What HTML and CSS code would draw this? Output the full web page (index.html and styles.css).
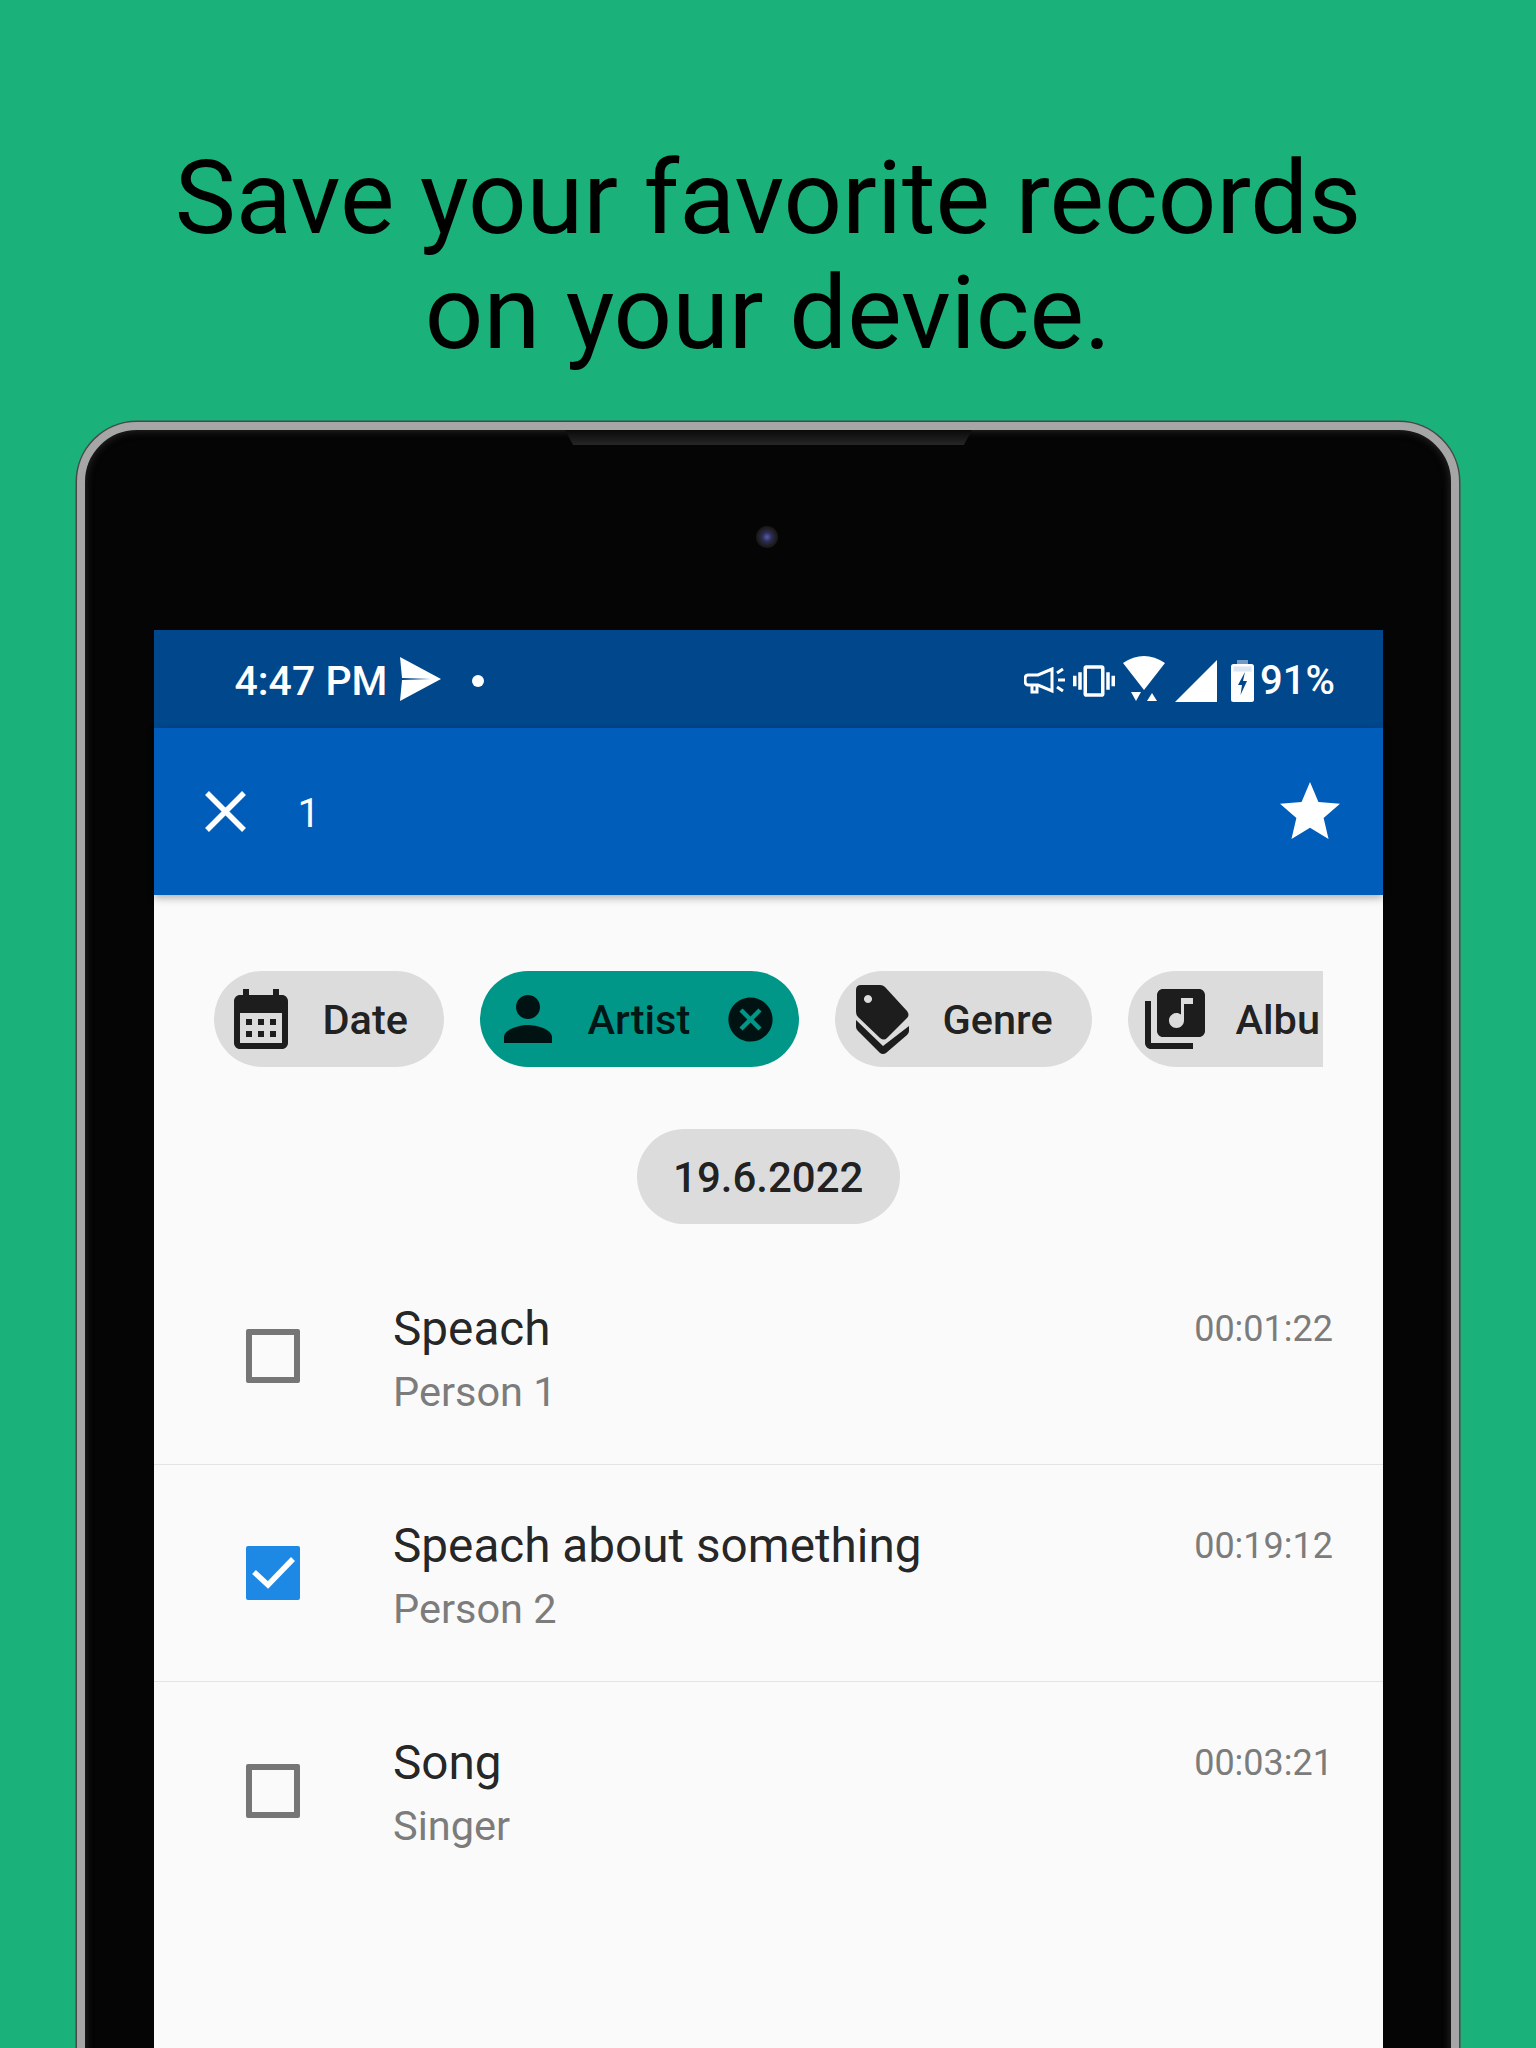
FILE: index.html

```html
<!DOCTYPE html>
<html lang="en">
<head>
  <meta charset="UTF-8" />
  <title>Save your favorite records</title>
  <link rel="stylesheet" href="styles.css">
</head>
<body>
  <div class="page">
    <h1 class="headline">Save your favorite records<br>on your device.</h1>

    <div class="device">
      <div class="notch"></div>
      <div class="camera"></div>

      <div class="screen">
        <div class="status-bar">
          <span class="clock">4:47 PM</span>
          <svg class="ic-send" viewBox="0 0 42 44"><path d="M1 0L42 22L1 44L3 23L32 22L3 21z" fill="#fff"/></svg>
          <span class="dot"></span>
          <span class="spacer"></span>
          <svg class="ic-mega" viewBox="0 0 42 28" fill="none" stroke="#fff" stroke-width="3">
            <path d="M4 8H14L28 2V24L14 18H4Q1 18 1 13Q1 8 4 8z"/>
            <path d="M8 18V25H13V19"/>
            <path d="M33 6L39 2M34 13H41M33 20L39 24"/>
          </svg>
          <svg class="ic-vib" viewBox="0 0 24 24"><path fill="#fff" d="M0 15h2V9H0v6zm3 2h2V7H3v10zm19-8v6h2V9h-2zm-3 8h2V7h-2v10zM16.5 3h-9C6.67 3 6 3.67 6 4.5v15c0 .83.67 1.5 1.5 1.5h9c.83 0 1.5-.67 1.5-1.5v-15c0-.83-.67-1.5-1.5-1.5zM16 19H8V5h8v14z"/></svg>
          <svg class="ic-wifi" viewBox="0 0 42 46"><path fill="#fff" d="M0 7Q21 -7 42 7L21 34zM8 36H18L13 45zM24 45H34L29 37z"/></svg>
          <svg class="ic-signal" viewBox="0 0 42 42"><path fill="#fff" d="M0 42L42 0V42z"/></svg>
          <svg class="ic-batt" viewBox="0 0 23 42">
            <rect x="6" y="0" width="11" height="5" fill="#fff" opacity=".45"/>
            <rect x="0" y="4" width="23" height="38" rx="2.5" fill="#fff"/>
            <rect x="2.5" y="6.5" width="18" height="5" fill="#dbe6f3"/>
            <path fill="#01478c" d="M14 12L7 25H11L9.5 35L16 21H12z"/>
          </svg>
          <span class="battery-text">91%</span>
        </div>

        <div class="app-bar">
          <svg class="ic-close" viewBox="0 0 41 41"><path d="M2 2L39 39M39 2L2 39" stroke="#fff" stroke-width="5.5" fill="none"/></svg>
          <span class="count">1</span>
          <span class="spacer"></span>
          <svg class="ic-star" viewBox="0 0 24 24"><path fill="#fff" d="M12 17.27L18.18 21l-1.64-7.03L22 9.24l-7.19-.61L12 2 9.19 8.63 2 9.24l5.46 4.73L5.82 21z"/></svg>
        </div>

        <div class="content">
          <div class="chips">
            <div class="chip chip-date">
              <svg class="chip-icon" viewBox="0 0 24 24"><path d="M19 4h-1V2h-2v2H8V2H6v2H5c-1.11 0-1.99.9-1.99 2L3 20c0 1.1.89 2 2 2h14c1.1 0 2-.9 2-2V6c0-1.1-.9-2-2-2zm0 16H5V10h14v10zM9 14H7v-2h2v2zm4 0h-2v-2h2v2zm4 0h-2v-2h2v2zm-8 4H7v-2h2v2zm4 0h-2v-2h2v2zm4 0h-2v-2h2v2z"/></svg>
              <span>Date</span>
            </div>
            <div class="chip chip-artist">
              <svg class="chip-icon" viewBox="0 0 24 24"><path d="M12 12c2.21 0 4-1.79 4-4s-1.79-4-4-4-4 1.79-4 4 1.79 4 4 4zm0 2c-2.67 0-8 1.34-8 4v2h16v-2c0-2.66-5.33-4-8-4z"/></svg>
              <span>Artist</span>
              <svg class="chip-remove" viewBox="0 0 24 24"><path d="M12 2C6.47 2 2 6.47 2 12s4.47 10 10 10 10-4.47 10-10S17.53 2 12 2zm5 13.59L15.59 17 12 13.41 8.41 17 7 15.59 10.59 12 7 8.41 8.41 7 12 10.59 15.59 7 17 8.41 13.41 12 17 15.59z"/></svg>
            </div>
            <div class="chip chip-genre">
              <svg class="genre-icon" viewBox="0 0 66 80"><path fill-rule="evenodd" d="M11 6H30q3 0 5 2L57 32q3 4 0 7L37 59q-3 3-7 0L8 38q-2-2-2-5V11q0-5 5-5zM18 16a4 4 0 1 0 .01 0z"/><path d="M6 41L33 67L59 47V52Q59 54 57 56L36 74Q33 76 30 74L8 52Q6 50 6 48z"/></svg>
              <span>Genre</span>
            </div>
            <div class="chip chip-album">
              <svg class="chip-icon" viewBox="0 0 24 24"><path d="M20 2H8c-1.1 0-2 .9-2 2v12c0 1.1.9 2 2 2h12c1.1 0 2-.9 2-2V4c0-1.1-.9-2-2-2zm-2 5h-3v5.5c0 1.38-1.12 2.5-2.5 2.5S10 13.88 10 12.5s1.12-2.5 2.5-2.5c.57 0 1.08.19 1.5.51V5h4v2zM4 6H2v14c0 1.1.9 2 2 2h14v-2H4V6z"/></svg>
              <span>Albu</span>
            </div>
          </div>

          <div class="date-row">
            <div class="date-pill">19.6.2022</div>
          </div>

          <div class="rows">
            <div class="row">
              <span class="check"></span>
              <div class="row-text">
                <div class="row-title">Speach</div>
                <div class="row-sub">Person 1</div>
              </div>
              <div class="row-time">00:01:22</div>
            </div>
            <div class="row">
              <span class="check checked">
                <svg viewBox="0 0 54 54"><path d="M8 26L22 39L47 13" stroke="#fff" stroke-width="5.5" fill="none"/></svg>
              </span>
              <div class="row-text">
                <div class="row-title">Speach about something</div>
                <div class="row-sub">Person 2</div>
              </div>
              <div class="row-time">00:19:12</div>
            </div>
            <div class="row last">
              <span class="check"></span>
              <div class="row-text">
                <div class="row-title">Song</div>
                <div class="row-sub">Singer</div>
              </div>
              <div class="row-time">00:03:21</div>
            </div>
          </div>
        </div>
      </div>
    </div>
  </div>
</body>
</html>
```

FILE: styles.css

```css
body {
  margin: 0;
  font-family: Roboto, "Liberation Sans", sans-serif;
}
.page {
  height: 2048px;
  overflow: hidden;
  background-color: #1ab27a;
  padding-top: 141px;
  box-sizing: border-box;
}
.headline {
  margin: 0;
  text-align: center;
  font-size: 102.8px;
  line-height: 115px;
  font-weight: 400;
  color: #000;
}

/* tablet frame */
.device {
  position: relative;
  box-sizing: border-box;
  width: 1382px;
  height: 1700px;
  margin: 51px 0 0 77px;
  padding: 200px 68px 0 68.5px;
  background: #050505;
  border: 8px solid #a6a6a6;
  border-radius: 60px;
  box-shadow: inset 0 0 8px #303030, 0 0 0 1.5px #484848;
}
.notch {
  position: absolute;
  top: 0;
  left: 480px;
  width: 407px;
  height: 15px;
  background: linear-gradient(#0a0a0a, #262626);
  clip-path: polygon(0 0, 100% 0, 98% 100%, 2% 100%);
}
.camera {
  position: absolute;
  top: 96px;
  left: 671px;
  width: 22px;
  height: 22px;
  border-radius: 50%;
  background: radial-gradient(circle, #5a5aa8 0, #2c2c55 30%, #1c1c1c 60%, #0c0c0c 100%);
}
.screen {
  height: 1500px;
  background: #fafafa;
}
.spacer {
  flex: 1;
}

/* status bar */
.status-bar {
  display: flex;
  align-items: center;
  box-sizing: border-box;
  height: 98px;
  padding: 3px 48px 0 81px;
  background: #01478c;
  color: #fff;
}
.clock {
  font-size: 41px;
  font-weight: 500;
  width: 164px;
}
.ic-send {
  width: 42px;
  height: 44px;
  margin-top: -4px;
}
.dot {
  width: 12px;
  height: 12px;
  margin-left: 31px;
  border-radius: 50%;
  background: #fff;
}
.ic-mega {
  width: 42px;
  height: 28px;
}
.ic-vib {
  width: 42px;
  height: 42px;
  margin-left: 7px;
}
.ic-wifi {
  width: 42px;
  height: 46px;
  margin: -3px 0 0 8px;
}
.ic-signal {
  width: 42px;
  height: 42px;
  margin-left: 10px;
}
.ic-batt {
  width: 23px;
  height: 42px;
  margin-left: 14px;
}
.battery-text {
  margin-left: 6px;
  font-size: 40px;
  font-weight: 500;
}

/* app bar */
.app-bar {
  position: relative;
  display: flex;
  align-items: center;
  height: 167px;
  padding: 0 37px 0 51px;
  background: #005dba;
  color: #fff;
  box-shadow: 0 3px 8px rgba(0,0,0,0.3);
}
.ic-close {
  width: 41px;
  height: 41px;
}
.count {
  margin-left: 52px;
  padding-top: 3px;
  font-size: 40px;
}
.ic-star {
  width: 72px;
  height: 72px;
}

/* filter chips */
.chips {
  display: flex;
  gap: 36px;
  width: 1109px;
  margin: 76px 0 0 60px;
  overflow: hidden;
}
.chip {
  flex-shrink: 0;
  display: flex;
  align-items: center;
  box-sizing: border-box;
  height: 96px;
  padding-left: 11px;
  border-radius: 48px;
  background: #dcdcdc;
  color: rgba(0,0,0,0.87);
  fill: rgba(0,0,0,0.87);
  font-size: 41.5px;
  font-weight: 500;
}
.chip-date {
  width: 230px;
}
.chip-artist {
  width: 319px;
  padding-left: 12px;
  background: #009688;
}
.chip-genre {
  width: 257px;
  padding-left: 15px;
}
.chip-album {
  width: 260px;
}
.chip-icon {
  flex-shrink: 0;
  width: 72px;
  height: 72px;
  margin-right: 26px;
}
.chip-album .chip-icon {
  margin-right: 25px;
}
.genre-icon {
  flex-shrink: 0;
  width: 66px;
  height: 80px;
  margin: 0 27px 0 0;
}
.chip-artist .chip-icon {
  margin-right: 24px;
}
.chip-remove {
  flex-shrink: 0;
  width: 53px;
  height: 53px;
  margin-left: 34px;
}

/* date separator */
.date-row {
  display: flex;
  justify-content: center;
  margin-top: 62px;
}
.date-pill {
  display: flex;
  align-items: center;
  justify-content: center;
  box-sizing: border-box;
  width: 263px;
  height: 95px;
  padding-top: 2px;
  border-radius: 48px;
  background: #dcdcdc;
  color: rgba(0,0,0,0.87);
  font-size: 42px;
  font-weight: 500;
}

/* record list */
.rows {
  margin-top: 24px;
}
.row {
  display: flex;
  align-items: center;
  box-sizing: border-box;
  height: 217px;
  padding: 0 50px 0 92.5px;
  border-bottom: 1px solid #e4e4e4;
}
.row.last {
  border-bottom: none;
}
.check {
  flex-shrink: 0;
  box-sizing: border-box;
  width: 54px;
  height: 54px;
  border: 6px solid #767676;
  border-radius: 2px;
}
.check.checked {
  border: none;
  background: #1e88e5;
}
.check svg {
  display: block;
}
.row-text {
  flex: 1;
  margin-left: 93px;
  padding-top: 3px;
}
.row-title {
  font-size: 47.7px;
  line-height: 60px;
  color: rgba(0,0,0,0.87);
}
.row-sub {
  margin-top: 8px;
  font-size: 41.5px;
  line-height: 50px;
  color: #7c7c7c;
}
.row-time {
  align-self: flex-start;
  margin-top: 58px;
  font-size: 36px;
  line-height: 46px;
  color: #7c7c7c;
}
```
